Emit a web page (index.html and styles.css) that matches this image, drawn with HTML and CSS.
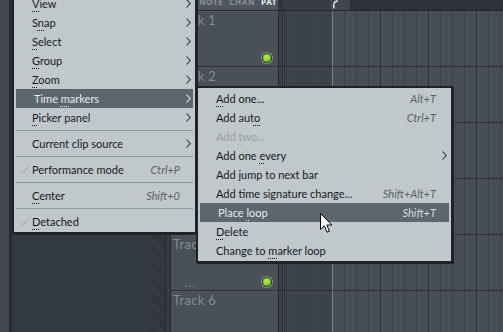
FILE: index.html
```html
<!DOCTYPE html>
<html lang="en">
<head>
  <meta charset="UTF-8" />
  <title>Playlist - Time markers menu</title>
  <link rel="stylesheet" href="styles.css">
</head>
<body>
  <div class="app">
    <div class="dock"></div>
    <div class="browser"></div>
    <div class="scroll"></div>
    <div class="gutter"></div>

    <div class="playlist">
      <div class="pl-head">
        <div class="pl-tabs"><span>NOTE</span><span>CHAN</span><span class="on">PAT</span></div>
        <div class="pl-sep"></div>
        <div class="ruler">
          <div class="ruler-pre"></div>
          <div class="loop-tab">
            <svg width="7" height="9" viewBox="0 0 7 9"><path d="M6 1 Q2 1.2 1.8 4.5 L1.8 8.5" fill="none" stroke="#dfe5e8" stroke-width="1.5"/></svg>
          </div>
          <div class="ruler-rest"></div>
        </div>
      </div>

      <div class="track">
        <div class="track-name"><span class="tname">Track 1</span><div class="tfoot"><span></span><span class="led"></span></div></div>
        <div class="track-div"></div>
        <div class="track-grid"></div>
      </div>
      <div class="track">
        <div class="track-name"><span class="tname">Track 2</span></div>
        <div class="track-div"></div>
        <div class="track-grid"></div>
      </div>
      <div class="track">
        <div class="track-name"><span class="tname">Track 3</span></div>
        <div class="track-div"></div>
        <div class="track-grid"></div>
      </div>
      <div class="track">
        <div class="track-name"><span class="tname">Track 4</span></div>
        <div class="track-div"></div>
        <div class="track-grid"></div>
      </div>
      <div class="track">
        <div class="track-name"><span class="tname">Track 5</span><div class="tfoot"><span class="more">...</span><span class="led"></span></div></div>
        <div class="track-div"></div>
        <div class="track-grid"></div>
      </div>
      <div class="track">
        <div class="track-name"><span class="tname">Track 6</span></div>
        <div class="track-div"></div>
        <div class="track-grid"></div>
      </div>
    </div>
  </div>

  <!-- main context menu -->
  <div class="menu main-menu">
    <div class="item"><span class="check"></span><span class="label"><u>V</u>iew</span><span class="key"></span><span class="sub"><svg width="5" height="9" viewBox="0 0 5 9"><path d="M0.5 0.5 L4.2 4.5 L0.5 8.5" fill="none" stroke="#27364a" stroke-width="1.1"/></svg></span></div>
    <div class="item"><span class="check"></span><span class="label">S<u>n</u>ap</span><span class="key"></span><span class="sub"><svg width="5" height="9" viewBox="0 0 5 9"><path d="M0.5 0.5 L4.2 4.5 L0.5 8.5" fill="none" stroke="#27364a" stroke-width="1.1"/></svg></span></div>
    <div class="item"><span class="check"></span><span class="label"><u>S</u>elect</span><span class="key"></span><span class="sub"><svg width="5" height="9" viewBox="0 0 5 9"><path d="M0.5 0.5 L4.2 4.5 L0.5 8.5" fill="none" stroke="#27364a" stroke-width="1.1"/></svg></span></div>
    <div class="item"><span class="check"></span><span class="label"><u>G</u>roup</span><span class="key"></span><span class="sub"><svg width="5" height="9" viewBox="0 0 5 9"><path d="M0.5 0.5 L4.2 4.5 L0.5 8.5" fill="none" stroke="#27364a" stroke-width="1.1"/></svg></span></div>
    <div class="item"><span class="check"></span><span class="label"><u>Z</u>oom</span><span class="key"></span><span class="sub"><svg width="5" height="9" viewBox="0 0 5 9"><path d="M0.5 0.5 L4.2 4.5 L0.5 8.5" fill="none" stroke="#27364a" stroke-width="1.1"/></svg></span></div>
    <div class="item active"><span class="check"></span><span class="label">Time <u>m</u>arkers</span><span class="key"></span><span class="sub"><svg width="5" height="9" viewBox="0 0 5 9"><path d="M0.5 0.5 L4.2 4.5 L0.5 8.5" fill="none" stroke="#e4eaee" stroke-width="1.1"/></svg></span></div>
    <div class="item"><span class="check"></span><span class="label"><u>P</u>icker panel</span><span class="key"></span><span class="sub"><svg width="5" height="9" viewBox="0 0 5 9"><path d="M0.5 0.5 L4.2 4.5 L0.5 8.5" fill="none" stroke="#27364a" stroke-width="1.1"/></svg></span></div>
    <div class="sep"></div>
    <div class="item"><span class="check"></span><span class="label">Current clip source</span><span class="key"></span><span class="sub"><svg width="5" height="9" viewBox="0 0 5 9"><path d="M0.5 0.5 L4.2 4.5 L0.5 8.5" fill="none" stroke="#27364a" stroke-width="1.1"/></svg></span></div>
    <div class="sep"></div>
    <div class="item"><span class="check"><svg width="9" height="8" viewBox="0 0 9 8"><path d="M0.8 4.2 L3.4 7 L8.4 0.8" fill="none" stroke="#98a0a6" stroke-width="1"/></svg></span><span class="label">Performance mode</span><span class="key">Ctrl+P</span><span class="sub"></span></div>
    <div class="sep"></div>
    <div class="item"><span class="check"></span><span class="label"><u>C</u>enter</span><span class="key">Shift+0</span><span class="sub"></span></div>
    <div class="sep"></div>
    <div class="item"><span class="check"><svg width="9" height="8" viewBox="0 0 9 8"><path d="M0.8 4.2 L3.4 7 L8.4 0.8" fill="none" stroke="#98a0a6" stroke-width="1"/></svg></span><span class="label"><u>D</u>etached</span><span class="key"></span><span class="sub"></span></div>
  </div>

  <!-- time markers submenu -->
  <div class="menu sub-menu">
    <div class="item"><span class="check"></span><span class="label"><u>A</u>dd one...</span><span class="key">Alt+T</span><span class="sub"></span></div>
    <div class="item"><span class="check"></span><span class="label">Add aut<u>o</u></span><span class="key">Ctrl+T</span><span class="sub"></span></div>
    <div class="item disabled"><span class="check"></span><span class="label">Add <u>t</u>wo...</span><span class="key"></span><span class="sub"></span></div>
    <div class="item"><span class="check"></span><span class="label">Add one <u>e</u>very</span><span class="key"></span><span class="sub"><svg width="5" height="9" viewBox="0 0 5 9"><path d="M0.5 0.5 L4.2 4.5 L0.5 8.5" fill="none" stroke="#27364a" stroke-width="1.1"/></svg></span></div>
    <div class="item"><span class="check"></span><span class="label">Add jump to next bar</span><span class="key"></span><span class="sub"></span></div>
    <div class="item"><span class="check"></span><span class="label">Add time signature change...</span><span class="key">Shift+Alt+T</span><span class="sub"></span></div>
    <div class="item active"><span class="check"></span><span class="label">Place <u>l</u>oop</span><span class="key">Shift+T</span><span class="sub"></span></div>
    <div class="item"><span class="check"></span><span class="label"><u>D</u>elete</span><span class="key"></span><span class="sub"></span></div>
    <div class="item"><span class="check"></span><span class="label">Change to <u>m</u>arker loop</span><span class="key"></span><span class="sub"></span></div>
  </div>

  <svg class="cursor" width="13" height="21" viewBox="0 0 13 21">
    <path d="M0.5 0.5 L0.5 16.5 L4.3 12.8 L7 19.2 L9.4 18.2 L6.8 12 L11.8 12 Z" fill="#ffffff" stroke="#000000" stroke-width="1"/>
  </svg>
</body>
</html>
```

FILE: styles.css
```css
html, body {
  margin: 0;
  padding: 0;
}

body {
  width: 503px;
  height: 332px;
  overflow: hidden;
  position: relative;
  background: #323940;
  font-family: Lato, "Noto Sans", sans-serif;
}

/* background: browser + playlist */
.app {
  display: flex;
  height: 332px;
}

.dock {
  width: 9px;
  background: #40474e;
  border-right: 3px solid #262c31;
}

.browser {
  width: 138px;
  background: #323940;
}

.scroll {
  width: 15px;
  background: repeating-linear-gradient(45deg, #2c3237 0 1px, #383e44 1px 2px);
}

.gutter {
  width: 6px;
  box-sizing: border-box;
  background: #353b41;
  border-left: 1px solid #262b30;
  border-right: 1px solid #262b30;
}

.playlist {
  flex: 1;
  display: flex;
  flex-direction: column;
  background: #474e55;
}

.pl-head {
  display: flex;
  height: 10px;
  flex-shrink: 0;
  border-bottom: 1px solid #22282d;
}

.pl-tabs {
  width: 107px;
  background: #4f565d;
  display: flex;
  justify-content: flex-end;
  align-items: flex-start;
  gap: 6px;
  padding-right: 1px;
  box-sizing: border-box;
  overflow: hidden;
  font-family: "Noto Sans", sans-serif;
  font-size: 8px;
  line-height: 8px;
  font-weight: bold;
  letter-spacing: 0.6px;
  color: #8a9298;
}
.pl-tabs span {
  margin-top: -2px;
}
.pl-tabs .on {
  color: #e8edf0;
}

.pl-sep {
  width: 5px;
  background: #30363b;
}

.ruler {
  flex: 1;
  display: flex;
}
.ruler-pre {
  width: 47px;
  background: #373d43;
}
.loop-tab {
  width: 20px;
  background: #40474e;
  padding-left: 2px;
  box-sizing: border-box;
}
.loop-tab svg {
  display: block;
}
.ruler-rest {
  flex: 1;
  background: #2d3338;
}

.track {
  display: flex;
  height: 55px;
  flex-shrink: 0;
  border-bottom: 1px solid #2a3035;
}

.track-name {
  width: 107px;
  box-sizing: border-box;
  background: #495057;
  border-top: 1px solid #50575e;
  display: flex;
  flex-direction: column;
  justify-content: space-between;
  padding: 0 6px 3px 2px;
}
.tname {
  font-size: 13px;
  line-height: 16px;
  letter-spacing: 0.3px;
  color: #848c92;
  white-space: nowrap;
}
.tfoot {
  display: flex;
  justify-content: space-between;
  align-items: flex-end;
}
.more {
  margin-left: 12px;
  font-size: 11px;
  line-height: 8px;
  color: #7e868c;
  letter-spacing: 1px;
}
.led {
  width: 8px;
  height: 8px;
  border-radius: 50%;
  border: 1px solid #2c4410;
  background: radial-gradient(circle at 40% 40%, #b9f052, #72c41e 70%);
  box-shadow: 0 0 0 1px #8a9298;
}

.track-div {
  width: 5px;
  box-sizing: border-box;
  background: #3a4046;
  border-left: 1px solid #252a2f;
  border-right: 1px solid #252a2f;
}

/* beat lines every 12px, bar lines every 48px, loop line at bar 2 */
.track-grid {
  flex: 1;
  background:
    linear-gradient(#7c848a, #7c848a) 49px 0 / 1px 100% no-repeat,
    linear-gradient(90deg, #2b3136 1px, transparent 1px) 1px 0 / 48px 100% repeat-x,
    linear-gradient(90deg, #383f45 1px, transparent 1px) 1px 0 / 12px 100% repeat-x,
    linear-gradient(#3c4349, #3c4349) 1px 0 / 48px 100% no-repeat,
    #474e55;
}

/* popup menus */
.menu {
  position: absolute;
  box-sizing: border-box;
  background: #c0c8cc;
  border: 2px solid #1e2328;
  box-shadow: 1px 1px 0 #1e2328;
  padding: 1px 2px;
  font-size: 11px;
  color: #16191c;
}

.main-menu {
  left: 12px;
  top: -9px;
  width: 185px;
}

.sub-menu {
  left: 196px;
  top: 86px;
  width: 257px;
}

.item {
  display: flex;
  align-items: center;
  height: 19px;
  line-height: 19px;
  white-space: nowrap;
}

.check {
  width: 16px;
  flex-shrink: 0;
  display: flex;
  align-items: center;
  padding-left: 4px;
  box-sizing: border-box;
}
.check svg {
  display: block;
}

.label {
  flex: 1;
}
.label u {
  text-decoration: underline dotted;
  text-decoration-thickness: 1px;
  text-underline-offset: 3px;
}

.key {
  font-style: italic;
  color: #5b6268;
}

.sub {
  width: 13px;
  flex-shrink: 0;
  display: flex;
  align-items: center;
  padding-left: 6px;
  box-sizing: border-box;
}
.sub svg {
  display: block;
}

.item.active {
  background: #5c666e;
  color: #e6ecef;
}
.item.active .label {
  padding-left: 2px;
}
.item.active .key {
  color: #d4dadd;
}

.item.disabled {
  color: #9aa1a6;
}

.sep {
  height: 7px;
  display: flex;
  align-items: center;
}
.sep::before {
  content: "";
  flex: 1;
  height: 1px;
  background: #8f979c;
}

.cursor {
  position: absolute;
  left: 320px;
  top: 213px;
}
```
